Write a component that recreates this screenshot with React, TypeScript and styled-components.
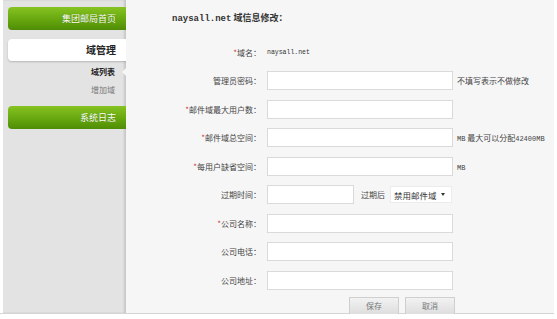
import React from 'react';
import styled, { createGlobalStyle } from 'styled-components';

const GlobalStyle = createGlobalStyle`
  body {
    margin: 0;
    background: #ffffff;
    font-family: "Noto Sans CJK SC", "Liberation Sans", sans-serif;
  }
`;

const Page = styled.div`
  display: flex;
  width: 554px;
  height: 314px;
  padding-left: 3px;
  border-bottom: 1px solid #d4d4d4;
  box-sizing: border-box;
`;

const Sidebar = styled.div`
  width: 123px;
  flex-shrink: 0;
  background: #e3e3e3;
  padding: 7px 0 0 5px;
  box-sizing: border-box;
  box-shadow: inset -2px 0 2px rgba(0, 0, 0, 0.12);
  display: flex;
  flex-direction: column;
`;

const GreenItem = styled.div`
  height: 23px;
  border-radius: 4px 0 0 4px;
  background: linear-gradient(#86c322, #64a40d 60%, #4f8c06);
  color: #fff;
  font-size: 9px;
  line-height: 23px;
  text-align: right;
  padding-right: 10px;
  text-shadow: 0 0 1px rgba(0, 0, 0, 0.25);
`;

const ActiveItem = styled.div`
  height: 22px;
  margin-top: 9px;
  border-radius: 4px 0 0 4px;
  background: #ffffff;
  box-shadow: 0 1px 2px rgba(0, 0, 0, 0.2);
  color: #222;
  font-size: 10px;
  font-weight: bold;
  line-height: 22px;
  text-align: right;
  padding-right: 10px;
`;

const SubItem = styled.div<{ $active?: boolean }>`
  position: relative;
  height: 18px;
  line-height: 18px;
  font-size: 8px;
  text-align: right;
  padding-right: 11px;
  color: ${({ $active }) => ($active ? '#222' : '#777')};
  font-weight: ${({ $active }) => ($active ? 'bold' : 'normal')};
`;

const Notch = styled.span`
  position: absolute;
  right: 0;
  top: 5px;
  width: 0;
  height: 0;
  border-top: 4px solid transparent;
  border-bottom: 4px solid transparent;
  border-right: 4px solid #f6f6f6;
`;

const SubList = styled.div`
  margin-top: 2px;
  margin-bottom: 7px;
`;

const Main = styled.div`
  flex: 1;
  background: #f6f6f6;
  color: #444;
`;

const Title = styled.div`
  padding: 10px 0 0 46px;
  height: 16px;
  line-height: 16px;
  font-size: 9px;
  font-weight: bold;
  color: #333;
`;

const Mono = styled.span<{ $size?: number }>`
  font-family: "Liberation Mono", monospace;
  font-size: ${({ $size }) => $size ?? 9}px;
`;

const Form = styled.div`
  margin-top: 12px;
  display: flex;
  flex-direction: column;
`;

const Row = styled.div`
  height: 28.5px;
  display: flex;
  align-items: center;
`;

const Label = styled.label`
  width: 135px;
  flex-shrink: 0;
  text-align: right;
  font-size: 8px;
  color: #444;
  margin-right: 6px;
`;

const Star = styled.span`
  color: #c8414b;
`;

const Input = styled.input<{ $w?: number }>`
  width: ${({ $w }) => $w ?? 186}px;
  height: 19px;
  box-sizing: border-box;
  border: 1px solid #dadada;
  background: #fff;
  padding: 0 3px;
  outline: none;
  flex-shrink: 0;
`;

const Hint = styled.span`
  margin-left: 4px;
  font-size: 8px;
  color: #444;
  white-space: nowrap;
`;

const Value = styled.span`
  font-family: "Liberation Mono", monospace;
  font-size: 6.5px;
  color: #333;
`;

const AfterLabel = styled.span`
  margin: 0 5px 0 7px;
  font-size: 8px;
  color: #444;
`;

const Select = styled.div`
  width: 62px;
  height: 17px;
  box-sizing: border-box;
  background: #fff;
  border: 1px solid #ececec;
  display: flex;
  align-items: center;
  padding: 0 3px;
  gap: 4px;
  font-size: 8.5px;
  color: #333;
`;

const Caret = styled.span`
  width: 0;
  height: 0;
  border-left: 2px solid transparent;
  border-right: 2px solid transparent;
  border-top: 3px solid #333;
`;

const Buttons = styled.div`
  display: flex;
  gap: 6px;
  margin-left: 223px;
  margin-top: 2px;
`;

const Button = styled.button`
  width: 50px;
  height: 18px;
  box-sizing: border-box;
  border: 1px solid #cfcfcf;
  background: linear-gradient(#f2f2f2, #dedede);
  color: #777;
  font-family: "Noto Sans CJK SC", sans-serif;
  font-size: 8px;
  padding: 0;
`;

const fields: { label: string; required?: boolean; hint?: React.ReactNode }[] = [
  { label: '管理员密码：', hint: '不填写表示不做修改' },
  { label: '邮件域最大用户数：', required: true },
  {
    label: '邮件域总空间：',
    required: true,
    hint: (
      <>
        <Mono $size={7}>MB</Mono> 最大可以分配<Mono $size={7}>42400MB</Mono>
      </>
    ),
  },
  { label: '每用户缺省空间：', required: true, hint: <Mono $size={7}>MB</Mono> },
];

const tailFields = [
  { label: '公司名称：', required: true },
  { label: '公司电话：' },
  { label: '公司地址：' },
];

const renderLabel = (label: string, required?: boolean) => (
  <Label>
    {required && <Star>*</Star>}
    {label}
  </Label>
);

const App: React.FC = () => {
  return (
    <>
      <GlobalStyle />
      <Page>
        <Sidebar>
          <GreenItem>集团邮局首页</GreenItem>
          <ActiveItem>域管理</ActiveItem>
          <SubList>
            <SubItem $active>
              域列表
              <Notch />
            </SubItem>
            <SubItem>增加域</SubItem>
          </SubList>
          <GreenItem>系统日志</GreenItem>
        </Sidebar>
        <Main>
          <Title>
            <Mono>naysall.net</Mono> 域信息修改：
          </Title>
          <Form>
            <Row>
              {renderLabel('域名：', true)}
              <Value>naysall.net</Value>
            </Row>
            {fields.map(f => (
              <Row key={f.label}>
                {renderLabel(f.label, f.required)}
                <Input />
                {f.hint && <Hint>{f.hint}</Hint>}
              </Row>
            ))}
            <Row>
              {renderLabel('过期时间：')}
              <Input $w={87} />
              <AfterLabel>过期后</AfterLabel>
              <Select>
                禁用邮件域
                <Caret />
              </Select>
            </Row>
            {tailFields.map(f => (
              <Row key={f.label}>
                {renderLabel(f.label, f.required)}
                <Input />
              </Row>
            ))}
            <Buttons>
              <Button>保存</Button>
              <Button>取消</Button>
            </Buttons>
          </Form>
        </Main>
      </Page>
    </>
  );
};

export default App;
